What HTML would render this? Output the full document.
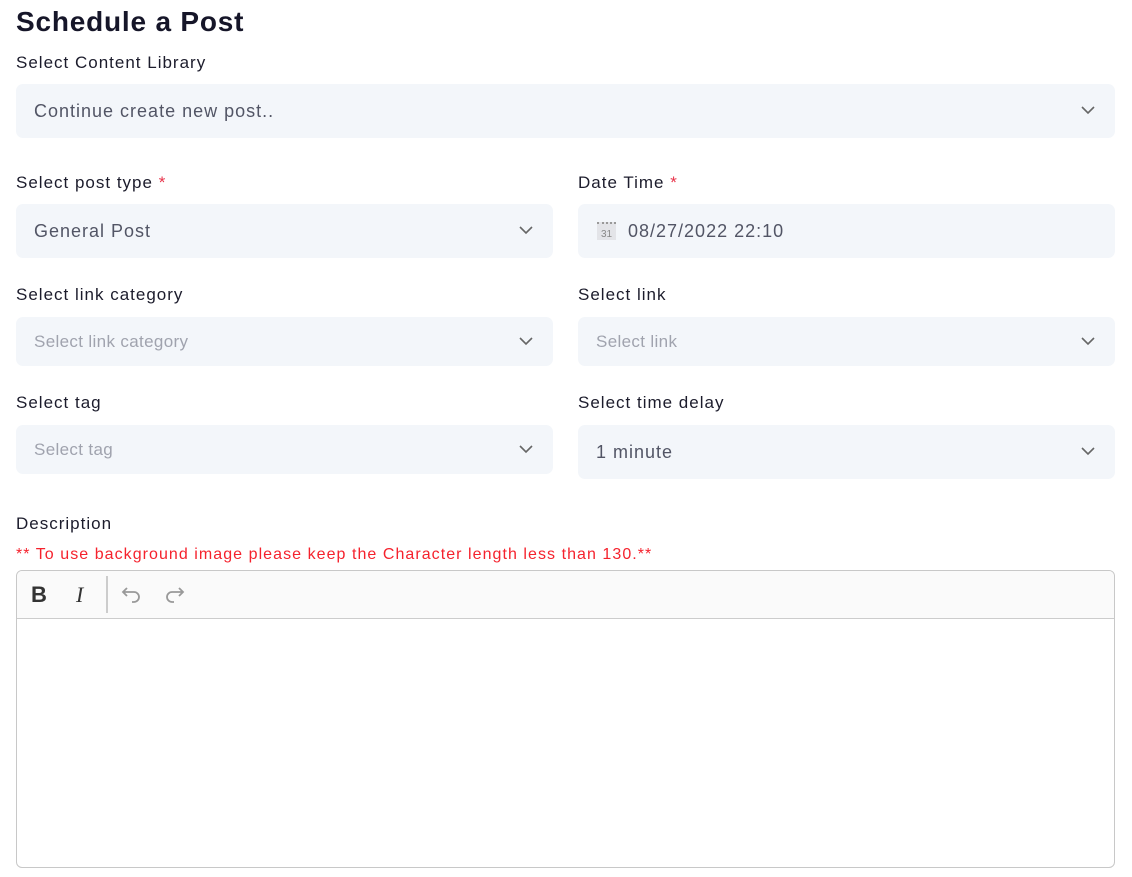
<!DOCTYPE html>
<html><head><style>
body{margin:0;background:#fff;font-family:"Liberation Sans",sans-serif;color:#1a1a2e;width:1132px;height:877px;overflow:hidden;position:relative}
.a{position:absolute}
h1{position:absolute;left:16px;top:6px;margin:0;font-size:28px;font-weight:bold;color:#161629;letter-spacing:0.8px}
.l{position:absolute;font-size:17px;color:#1c1c2c;letter-spacing:1px}
.l b{color:#e8334a;font-weight:normal}
.s{position:absolute;background:#f3f6fa;border-radius:7px;font-size:18px;color:#525565;box-sizing:border-box;padding-left:18px;display:flex;align-items:center;letter-spacing:1px}
.p{color:#a0a3ae;font-size:17px;letter-spacing:0.35px}
.s svg{position:absolute;right:20px;top:50%;margin-top:-5px}
</style></head><body>
<h1>Schedule a Post</h1>
<div class="l" style="left:16px;top:53px">Select Content Library</div>
<div class="s" style="left:16px;top:84px;width:1099px;height:54px">Continue create new post..<svg width="14" height="9" viewBox="0 0 14 9"><path d="M1 1l6 6 6-6" fill="none" stroke="#666" stroke-width="1.6"/></svg></div>

<div class="l" style="left:16px;top:173px">Select post type <b>*</b></div>
<div class="s" style="left:16px;top:204px;width:537px;height:54px">General Post<svg width="14" height="9" viewBox="0 0 14 9"><path d="M1 1l6 6 6-6" fill="none" stroke="#666" stroke-width="1.6"/></svg></div>
<div class="l" style="left:578px;top:173px">Date Time <b>*</b></div>
<div class="s" style="left:578px;top:204px;width:537px;height:54px;padding-left:50px">08/27/2022 22:10
<div class="a" style="left:19px;top:18px;width:19px;height:18px;background:#e3e4e8;font-size:10px;color:#888;text-align:center;line-height:22px;border-top:2px dotted #999;box-sizing:border-box;letter-spacing:0">31</div></div>

<div class="l" style="left:16px;top:285px">Select link category</div>
<div class="s" style="left:16px;top:317px;width:537px;height:49px"><span class="p">Select link category</span><svg width="14" height="9" viewBox="0 0 14 9"><path d="M1 1l6 6 6-6" fill="none" stroke="#666" stroke-width="1.6"/></svg></div>
<div class="l" style="left:578px;top:285px">Select link</div>
<div class="s" style="left:578px;top:317px;width:537px;height:49px"><span class="p">Select link</span><svg width="14" height="9" viewBox="0 0 14 9"><path d="M1 1l6 6 6-6" fill="none" stroke="#666" stroke-width="1.6"/></svg></div>

<div class="l" style="left:16px;top:393px">Select tag</div>
<div class="s" style="left:16px;top:425px;width:537px;height:49px"><span class="p">Select tag</span><svg width="14" height="9" viewBox="0 0 14 9"><path d="M1 1l6 6 6-6" fill="none" stroke="#666" stroke-width="1.6"/></svg></div>
<div class="l" style="left:578px;top:393px">Select time delay</div>
<div class="s" style="left:578px;top:425px;width:537px;height:54px">1 minute<svg width="14" height="9" viewBox="0 0 14 9"><path d="M1 1l6 6 6-6" fill="none" stroke="#666" stroke-width="1.6"/></svg></div>

<div class="l" style="left:16px;top:514px">Description</div>
<div class="a" style="left:16px;top:546px;font-size:16px;color:#f5222d;letter-spacing:1.05px">** To use background image please keep the Character length less than 130.**</div>
<div class="a" style="left:16px;top:570px;width:1097px;height:296px;border:1px solid #c8c8c8;border-radius:6px;overflow:hidden">
<div style="height:47px;background:#fafafa;border-bottom:1px solid #ccc;position:relative">
<div class="a" style="left:14px;top:11px;font-size:22px;font-weight:bold;color:#333">B</div>
<div class="a" style="left:59px;top:11px;font-size:22px;font-style:italic;font-family:'Liberation Serif',serif;color:#333">I</div>
<div class="a" style="left:89px;top:5px;width:2px;height:37px;background:#ccc"></div>
<svg class="a" style="left:104px;top:14px" width="22" height="18" viewBox="0 0 22 18"><path d="M6 3L2 7l4 4M2 7h11a5 5 0 0 1 0 10h-2" fill="none" stroke="#999" stroke-width="1.8"/></svg>
<svg class="a" style="left:146px;top:14px" width="22" height="18" viewBox="0 0 22 18"><path d="M16 3l4 4-4 4M20 7H9a5 5 0 0 0 0 10h2" fill="none" stroke="#999" stroke-width="1.8"/></svg>
</div></div>
</body></html>
